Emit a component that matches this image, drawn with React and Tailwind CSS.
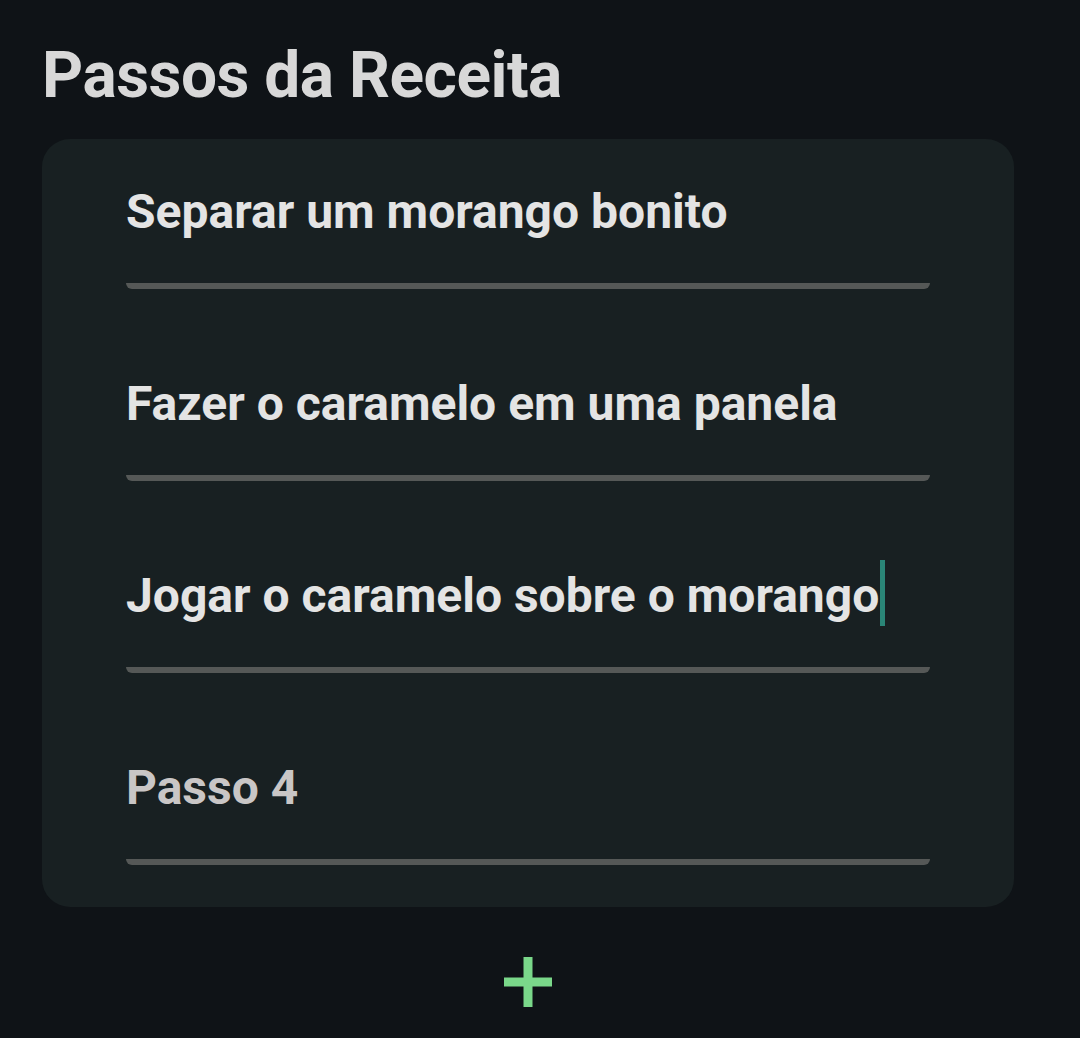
import React from "react";

const steps = [
  { text: "Separar um morango bonito" },
  { text: "Fazer o caramelo em uma panela" },
  { text: "Jogar o caramelo sobre o morango", caret: true },
  { placeholder: "Passo 4" },
];

const StepField = ({ text, placeholder, caret, first }) => {
  return (
    <div className={`${first ? "h-[150px]" : "h-[192px]"} flex flex-col justify-end`}>
      <div className="flex items-center h-[66px] mb-[41px]">
        {text ? (
          <span className="text-[#e4e4e4] text-[48px] font-bold leading-none mt-[5px]">
            {text}
          </span>
        ) : (
          <span className="text-[#c9c6c6] text-[48px] font-bold leading-none mt-[5px]">
            {placeholder}
          </span>
        )}
        {caret && <span className="w-[5px] h-[66px] bg-[#2a8577] ml-[1px]"></span>}
      </div>
      <div className="h-[6px] bg-[#555857] rounded-b-full"></div>
    </div>
  );
};

const App = () => {
  return (
    <div
      className="w-[1080px] h-[1038px] bg-[#0f1317] overflow-hidden"
      style={{ fontFamily: "Roboto, 'Liberation Sans', sans-serif" }}
    >
      <div className="pl-[42px] pt-[44px]">
        <h1 className="text-[#d8d8d8] text-[64px] font-bold leading-none tracking-[-0.5px]">
          Passos da Receita
        </h1>
      </div>
      <div className="mt-[31px] ml-[42px] w-[972px]">
        <div className="h-[768px] bg-[#182022] rounded-[28px] px-[84px]">
          {steps.map((s, i) => (
            <StepField key={i} first={i === 0} {...s} />
          ))}
        </div>
        <div className="flex justify-center mt-[50px]">
          <svg width="48" height="50" viewBox="0 0 48 50">
            <rect x="19.5" y="0" width="9" height="50" fill="#7ad88a" />
            <rect x="0" y="20.5" width="48" height="9" fill="#7ad88a" />
          </svg>
        </div>
      </div>
    </div>
  );
};

export default App;
